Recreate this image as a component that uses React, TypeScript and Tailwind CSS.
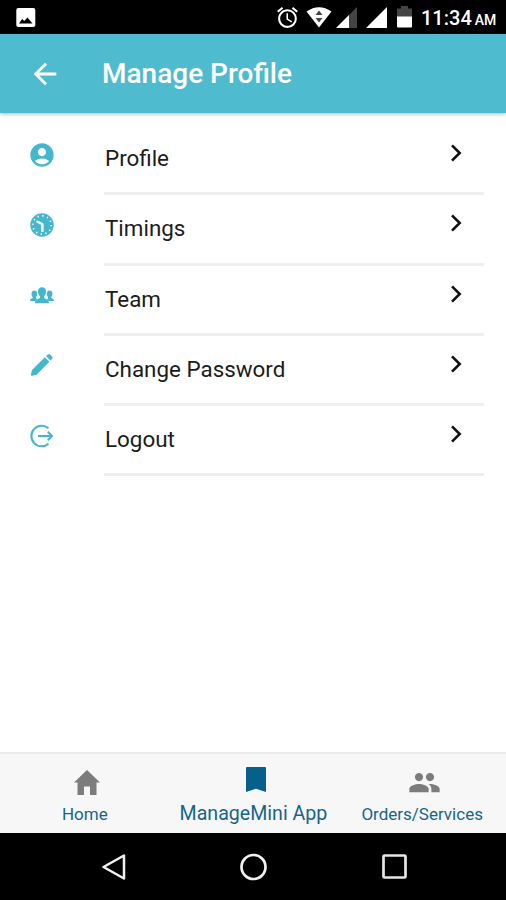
import type { ReactNode } from "react";
import { MdAccountCircle, MdAlarm, MdArrowBack, MdPeople } from "react-icons/md";

function ClockIcon() {
  return (
    <svg width="24" height="24" viewBox="0 0 24 24" fill="none">
      <circle cx="12" cy="12" r="11.7" fill="#43b8cc" />
      <circle cx="12" cy="12" r="9.2" stroke="#fff" strokeWidth="1.7" strokeDasharray="1.3 3.517" />
      <path d="M6.5 8.2 L12.4 11.2 V19" stroke="#fff" strokeWidth="2.4" />
    </svg>
  );
}

function TeamIcon() {
  return (
    <svg width="24" height="17" viewBox="0 0 24 17" fill="#43b8cc">
      <path d="M12 0.3c2.6 0 4 1.7 4 4.2 0 2-.8 3.6-1.9 4.6v1.6c.4 1.3 5 1.4 5 5.6H4.9c0-4.2 4.6-4.3 5-5.6V9.1C8.8 8.1 8 6.5 8 4.5 8 2 9.4.3 12 .3z" />
      <path d="M4.3 3.5c1.9 0 2.9 1.3 2.9 3.2 0 1.5-.5 2.5-1.2 3.3v1.3c.2.4.8.7 1.4 1-.8.4-1.5.9-2 1.6H0c0-2.3 2.2-2.1 2.8-3.1V10C2 9.3 1.5 8.2 1.5 6.7c0-1.9 1-3.2 2.8-3.2z" />
      <path d="M19.7 3.5c-1.9 0-2.9 1.3-2.9 3.2 0 1.5.5 2.5 1.2 3.3v1.3c-.2.4-.8.7-1.4 1 .8.4 1.5.9 2 1.6H24c0-2.3-2.2-2.1-2.8-3.1V10c.8-.7 1.3-1.8 1.3-3.3 0-1.9-1-3.2-2.8-3.2z" />
    </svg>
  );
}

function PencilIcon() {
  return (
    <svg width="24" height="24" viewBox="0 0 24 24" fill="#43b8cc">
      <path d="M14.800 4.200 L19.400 8.800 L6.600 21.700 L2.300 22.800 Q0.500 23 1 21.200 L2 17 Z" />
      <path d="M16 3.100 L18 1.400 Q19.200 0.700 20.200 1.600 L22.200 3.700 Q23 4.600 22.200 5.700 L20.500 7.500 Z" />
    </svg>
  );
}

function LogoutIcon() {
  return (
    <svg width="24" height="24" viewBox="0 0 24 24" fill="none" stroke="#43b8cc" strokeWidth="2.1">
      <path d="M18.5 4.3 A10.3 10.3 0 1 0 18.5 19.7" />
      <path d="M8 12 H22 M17.8 7.8 L22 12 L17.8 16.2" />
    </svg>
  );
}

const items: { label: string; icon: ReactNode }[] = [
  { label: "Profile", icon: <MdAccountCircle size={28} /> },
  { label: "Timings", icon: <ClockIcon /> },
  { label: "Team", icon: <TeamIcon /> },
  { label: "Change Password", icon: <PencilIcon /> },
  { label: "Logout", icon: <LogoutIcon /> },
];

function StatusBar() {
  return (
    <div className="flex h-[34px] items-start bg-black pl-4 text-white">
      <svg className="mt-2" width="20" height="19" viewBox="0 0 20 19">
        <rect x="0.3" width="19" height="19" rx="2" fill="#fff" />
        <path d="M3 15.500 L6.200 11 L8.200 13 L11.500 9.500 L16.500 15.500 Z" fill="#000" />
      </svg>
      <MdAlarm className="mt-[5px] ml-[239px]" size={25} />
      <svg className="mt-[7px] ml-[6px]" width="26" height="21" viewBox="0 0 26 21">
        <path d="M0.5 4.5 Q13 -4 25.5 4.5 L13 20.5 Z" fill="#fff" />
        <path d="M9.5 8 L13 3.5 L16.5 8 Z M9.5 11 L13 15.5 L16.5 11 Z" fill="#444" />
      </svg>
      <svg className="mt-[7px] ml-[4px]" width="21" height="21" viewBox="0 0 21 21">
        <path d="M0 21 L21 0 V21 Z" fill="#444" />
        <path d="M0 21 L13 8 V21 Z" fill="#fff" />
      </svg>
      <svg className="mt-[7px] ml-[9px]" width="21" height="21" viewBox="0 0 21 21">
        <path d="M0 21 L21 0 V21 Z" fill="#fff" />
      </svg>
      <svg className="mt-[6px] ml-[10px]" width="15" height="22" viewBox="0 0 15 22">
        <path d="M0 2.5 H4 V0 H11 V2.5 H15 V11 H0 Z" fill="#444" />
        <path d="M0 10.5 H15 V20.5 Q15 21.5 14 21.5 H1 Q0 21.5 0 20.5 Z" fill="#fff" />
      </svg>
      <div className="mt-[4px] ml-[9px] text-[20px] leading-7 font-medium whitespace-nowrap">
        11:34 <span className="-ml-[2px] text-[14px]">AM</span>
      </div>
    </div>
  );
}

function TabBar() {
  return (
    <div className="grid h-[81px] grid-cols-3 border-t-2 border-[#ececec] bg-[#f7f7f7] text-[#17658a]">
      <div className="flex flex-col items-center">
        <svg className="mt-4 ml-[5px]" width="26" height="25" viewBox="0 0 26 25" fill="#7c7c7c">
          <path d="M13 0 L26 12.5 H22.5 V25 H16 V16.5 H10 V25 H3.5 V12.5 H0 Z" />
        </svg>
        <span className="mt-[7px] ml-px text-[17px] leading-6">Home</span>
      </div>
      <div className="flex flex-col items-center">
        <svg className="mt-[13px] ml-[6px]" width="20" height="25" viewBox="0 0 20 25" fill="#07608a">
          <path d="M0 1 Q0 0 1 0 H19 Q20 0 20 1 V25 L10 21.8 L0 25 Z" />
        </svg>
        <span className="mt-[10px] ml-px text-[19.6px] leading-6 whitespace-nowrap">ManageMini App</span>
      </div>
      <div className="flex flex-col items-center">
        <MdPeople className="mt-[12px] ml-[5px] text-[#7c7c7c]" size={33} />
        <span className="mt-[3px] ml-px text-[17px] leading-6">Orders/Services</span>
      </div>
    </div>
  );
}

function AndroidNav() {
  return (
    <div className="flex h-[67px] items-center bg-black">
      <svg className="ml-[101px]" width="26" height="28" viewBox="0 0 26 28" fill="none" stroke="#f1f1f1" strokeWidth="2.5">
        <path d="M23 2.5 V25.5 L2.5 14 Z" strokeLinejoin="round" />
      </svg>
      <svg className="ml-[112px]" width="28" height="28" viewBox="0 0 28 28" fill="none" stroke="#f1f1f1" strokeWidth="2.7">
        <circle cx="14.5" cy="14" r="12" />
      </svg>
      <svg className="ml-[115px]" width="25" height="25" viewBox="0 0 25 25" fill="none" stroke="#e6e6e6" strokeWidth="2.7">
        <rect x="1.5" y="1.5" width="22" height="22" rx="1" />
      </svg>
    </div>
  );
}

export default function App() {
  return (
    <div className="flex h-[900px] w-[506px] flex-col overflow-hidden bg-white font-[Roboto,sans-serif]">
      <StatusBar />
      <header className="z-10 flex h-[79px] items-center bg-[#4fbbcf] pl-7 text-white shadow-[0_1px_4px_rgba(0,0,0,0.3)]">
        <MdArrowBack size={34} />
        <h1 className="ml-10 text-[28px] leading-8 font-medium">Manage Profile</h1>
      </header>

      <main className="flex-1 pt-3">
        {items.map((item) => (
          <div key={item.label} className="flex h-[70.3px]">
            <div className="flex h-[59px] w-[84px] shrink-0 items-center justify-center text-[#43b8cc]">
              {item.icon}
            </div>
            <div className="ml-5 flex w-[380px] justify-between border-b-[3px] border-[#efefef] text-[#1c1c1c]">
              <span className="pt-[19px] pl-px text-[22.4px] leading-7">{item.label}</span>
              <svg className="mt-[19px] mr-[21px]" width="14" height="18" viewBox="0 0 14 18" fill="none" stroke="#111" strokeWidth="2.6">
                <path d="M3 1.3 L10.7 9 L3 16.7" />
              </svg>
            </div>
          </div>
        ))}
      </main>

      <TabBar />
      <AndroidNav />
    </div>
  );
}
